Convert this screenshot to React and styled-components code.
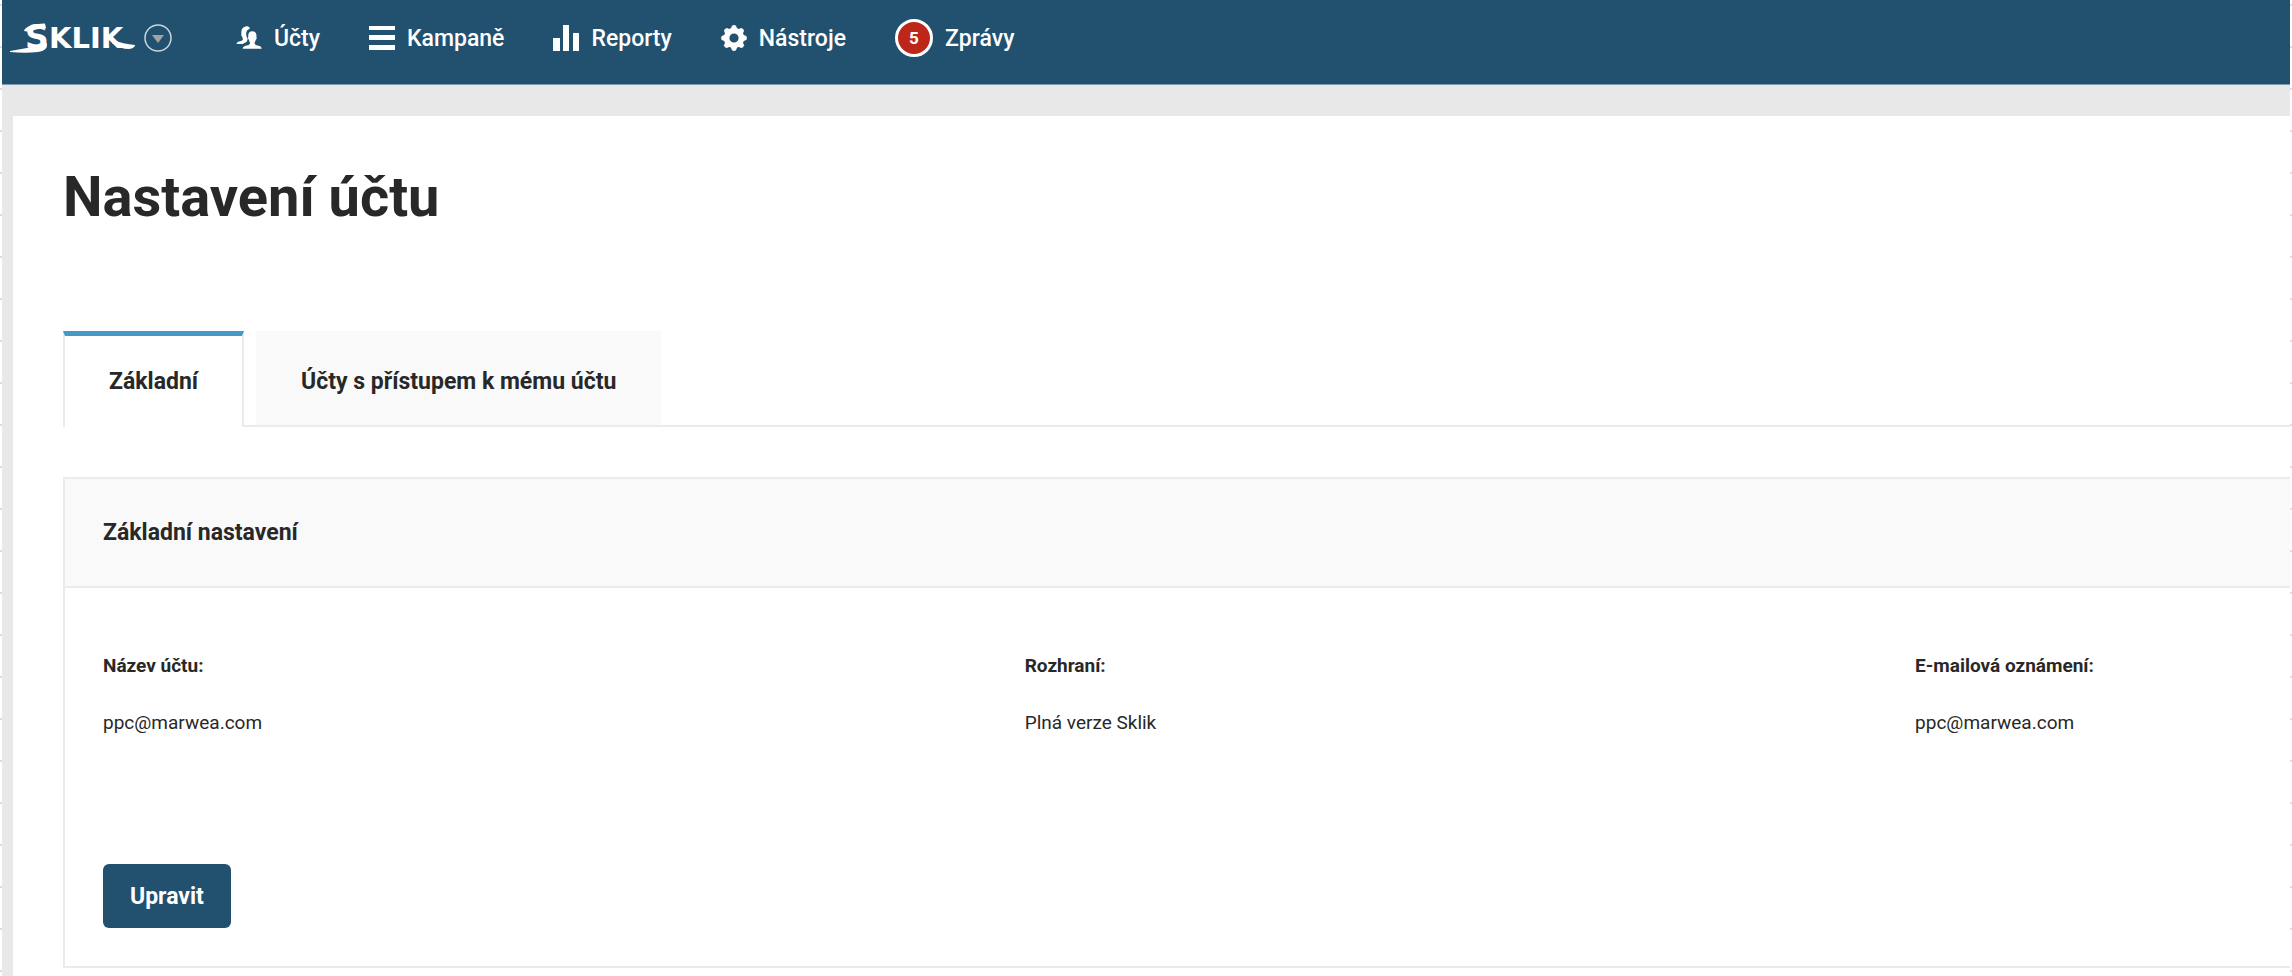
import React from 'react';
import styled, { createGlobalStyle } from 'styled-components';

const palette = {
  navy: '#22506f',
  navyEdge: '#7c9cb3',
  blue: '#4698c9',
  red: '#bd271a',
  text: '#282828',
  line: '#ebebeb',
  panel: '#f9f9f9',
  page: '#e8e8e8',
};

const menu = [
  { label: 'Účty', icon: <UsersIcon /> },
  { label: 'Kampaně', icon: <ListIcon /> },
  { label: 'Reporty', icon: <ChartIcon /> },
  { label: 'Nástroje', icon: <GearIcon /> },
];

const fields = [
  { label: 'Název účtu:', value: 'ppc@marwea.com' },
  { label: 'Rozhraní:', value: 'Plná verze Sklik' },
  { label: 'E-mailová oznámení:', value: 'ppc@marwea.com' },
];

function UsersIcon() {
  return (
    <svg width='26' height='26' viewBox='0 0 26 26' fill='#fff' aria-hidden='true'>
      <path d='M9.500 1.500c2.600-.8 4 .2 4.400 2.300-2.600.9-3.900 2.700-3.700 5.500.2 2 .7 3.400 1.500 4.500-.3 1.200-.5 2.200-1.200 3.100-1.400.8-2.800 1.300-3.900 2.200H.5c.2-1.600 1-2.300 2.800-2.700 2-.5 3.400-.9 3.600-2.200 0-1-.8-1.900-1-3-.8-.5-.8-1.400-.5-2.200-.3-4 .8-6.700 4.100-7.500z' />
      <path d='M16.300 6.200c3.300 0 4.500 2.400 4.100 5.800.6.800.2 2.200-.6 2.700-.3 1.300-.6 2-1.200 2.700 0 1.900.8 2.700 3.200 3.200 2.300.6 3.700 1.200 3.900 3.200H6.700c.1-1.700 1.500-2.600 3.800-3.200 2.600-.7 3.600-1.400 3.500-3.200-.6-.7-.9-1.500-1.100-2.700-.9-.5-1.200-1.900-.6-2.700-.5-3.400.9-5.800 4-5.800z' />
    </svg>
  );
}

function ListIcon() {
  return (
    <svg width='26' height='26' viewBox='0 0 26 26' fill='#fff' aria-hidden='true'>
      <path d='M0 1h26v4H0zM0 10h26v5H0zM0 20h26v5H0z' />
    </svg>
  );
}

function ChartIcon() {
  return (
    <svg width='26' height='26' viewBox='0 0 26 26' fill='#fff' aria-hidden='true'>
      <path d='M0 13h7v13H0zM10 0h6v26h-6zM20 8h6v18h-6z' />
    </svg>
  );
}

function GearIcon() {
  const teeth = [0, 45, 90, 135, 180, 225, 270, 315];
  return (
    <svg width='26' height='26' viewBox='0 0 26 26' aria-hidden='true'>
      <circle cx='13' cy='13' r='7.400' fill='none' stroke='#fff' strokeWidth='5.600' />
      {teeth.map((angle) => (
        <path
          key={angle}
          d='M9.500 4.500L11 .8Q13-.6 15 .8L16.500 4.500z'
          fill='#fff'
          transform={`rotate(${angle} 13 13)`}
        />
      ))}
    </svg>
  );
}

function SklikLogo() {
  return (
    <LogoDrawing width='126' height='34' viewBox='0 0 126 34' role='img' aria-label='Sklik'>
      <text x='15' y='28' fontSize='33'>
        S
      </text>
      <text x='39' y='27' fontSize='29'>
        KLIK
      </text>
      <path d='M0 30Q12 28 22 26L37 22Q38 30 28 31Q15 32.500 0 31z' />
      <path d='M14 10Q16 3 35 2.500L36 7.500Q26 7 20 11z' />
      <path d='M103 19Q113 23 125 24Q125 27 119 28Q110 28 102 22z' />
    </LogoDrawing>
  );
}

const App = () => {
  return (
    <>
      <GlobalStyle />
      <Page>
        <Navbar>
          <Brand>
            <HomeLink href='#'>
              <SklikLogo />
            </HomeLink>
            <SwitchButton type='button' aria-label='Sklik menu'>
              <svg width='28' height='28' viewBox='0 0 28 28' aria-hidden='true'>
                <circle cx='14' cy='14' r='13' fill='none' stroke='#c9d5dd' strokeWidth='1.500' />
                <path d='M8 11h12l-6 8z' fill='#a5a3a1' />
              </svg>
            </SwitchButton>
          </Brand>
          <Menu>
            {menu.map((item) => (
              <MenuLink key={item.label} href='#'>
                {item.icon}
                {item.label}
              </MenuLink>
            ))}
            <MenuLink href='#'>
              <Badge>5</Badge>
              Zprávy
            </MenuLink>
          </Menu>
        </Navbar>
        <Main>
          <Title>Nastavení účtu</Title>
          <Tabs role='tablist'>
            <Tab type='button' role='tab' aria-selected='true' $active>
              Základní
            </Tab>
            <Tab type='button' role='tab' aria-selected='false'>
              Účty s přístupem k mému účtu
            </Tab>
          </Tabs>
          <Card>
            <CardTitle>Základní nastavení</CardTitle>
            <CardBody>
              <Fields>
                {fields.map((field) => (
                  <div key={field.label}>
                    <FieldLabel>{field.label}</FieldLabel>
                    <FieldValue>{field.value}</FieldValue>
                  </div>
                ))}
              </Fields>
              <EditButton type='button'>Upravit</EditButton>
            </CardBody>
          </Card>
        </Main>
      </Page>
    </>
  );
};

const GlobalStyle = createGlobalStyle`
  * {
    box-sizing: border-box;
  }

  body {
    margin: 0;
    font-family: Roboto, 'Liberation Sans', sans-serif;
    color: ${palette.text};
    background: #fff repeating-linear-gradient(#fff 0 4px, #dedede 4px 6px, #fff 6px 42px);
  }
`;

const Page = styled.div`
  display: flex;
  flex-direction: column;
  min-height: 100vh;
  margin: 0 2px;
  background: ${palette.page};
`;

const Navbar = styled.header`
  display: flex;
  align-items: flex-start;
  height: 85px;
  padding: 18px 8px;
  background: ${palette.navy};
  border-bottom: 1px solid ${palette.navyEdge};
`;

const Brand = styled.div`
  display: flex;
  align-items: center;
  gap: 8px;
  height: 40px;
  margin-right: 64px;
`;

const HomeLink = styled.a`
  display: flex;
`;

const LogoDrawing = styled.svg`
  overflow: visible;
  fill: #fff;
  font-family: 'DejaVu Sans', sans-serif;
  font-weight: 700;
`;

const SwitchButton = styled.button`
  display: flex;
  padding: 0;
  border: 0;
  background: none;
`;

const Menu = styled.nav`
  display: flex;
  gap: 49px;
`;

const MenuLink = styled.a`
  display: flex;
  align-items: center;
  gap: 12px;
  height: 40px;
  color: #fff;
  font-size: 23px;
  font-weight: 500;
  text-decoration: none;
`;

const Badge = styled.span`
  display: flex;
  align-items: center;
  justify-content: center;
  width: 38px;
  height: 38px;
  border: 3px solid #fff;
  border-radius: 50%;
  background: ${palette.red};
  font-size: 17px;
  font-weight: 700;
`;

const Main = styled.main`
  flex: 1;
  margin: 31px 0 0 11px;
  padding: 49px 0 10px 50px;
  background: #fff;
`;

const Title = styled.h1`
  margin: 0 0 102px;
  font-size: 56px;
  font-weight: 700;
  line-height: 64px;
`;

const Tabs = styled.div`
  display: flex;
  gap: 12px;
  height: 96px;
  border-bottom: 2px solid ${palette.line};
`;

const Tab = styled.button`
  margin-bottom: ${(props) => (props.$active ? '-2px' : '0')};
  padding: ${(props) => (props.$active ? '0 44px' : '2px 45px 0')};
  border: solid ${palette.line};
  border-width: ${(props) => (props.$active ? '0 2px' : '0')};
  border-top: 5px solid ${(props) => (props.$active ? palette.blue : palette.panel)};
  background: ${(props) => (props.$active ? '#fff' : palette.panel)};
  color: inherit;
  font: 700 23px Roboto, 'Liberation Sans', sans-serif;
`;

const Card = styled.section`
  margin-top: 50px;
  border: 2px solid ${palette.line};
  border-right: 0;
`;

const CardTitle = styled.h2`
  margin: 0;
  padding: 38px;
  border-bottom: 2px solid ${palette.line};
  background: ${palette.panel};
  font-size: 23px;
  line-height: 31px;
`;

const CardBody = styled.div`
  padding: 64px 0 38px 38px;
`;

const Fields = styled.dl`
  display: grid;
  grid-template-columns: 59fr 57fr 24fr;
  margin: 0 0 127px;
  font-size: 19px;
  line-height: 28px;
`;

const FieldLabel = styled.dt`
  margin-bottom: 29px;
  font-weight: 700;
`;

const FieldValue = styled.dd`
  margin: 0;
`;

const EditButton = styled.button`
  height: 64px;
  padding: 0 27px;
  border: 0;
  border-radius: 6px;
  background: ${palette.navy};
  color: #fff;
  font: 700 23px Roboto, 'Liberation Sans', sans-serif;
`;

export default App;
